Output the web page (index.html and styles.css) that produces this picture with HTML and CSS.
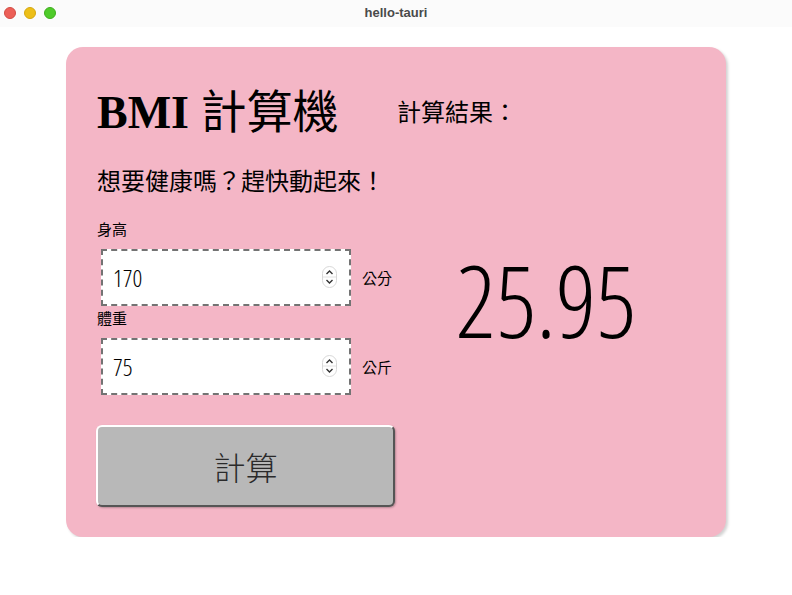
FILE: index.html
```html
<!DOCTYPE html>
<html lang="zh-Hant">
<head>
<meta charset="utf-8">
<title>hello-tauri</title>
<link rel="stylesheet" href="styles.css">
</head>
<body>
<div class="titlebar">
  <div class="lights">
    <span class="light red"></span>
    <span class="light yellow"></span>
    <span class="light green"></span>
  </div>
  <div class="wintitle">hello-tauri</div>
</div>
<main class="page">
  <section class="card">
    <div class="left">
      <h1 class="title">BMI <span class="cjk">計算機</span></h1>
      <p class="subtitle">想要健康嗎？趕快動起來！</p>
      <div class="field">
        <label class="label">身高</label>
        <div class="row">
          <div class="inputbox">
            <span class="value">170</span>
            <svg class="spin" width="15" height="22" viewBox="0 0 15 22"><rect x="0.5" y="0.5" width="14" height="21" rx="7" fill="#fff" stroke="#d8d8d8"/><line x1="1" y1="11" x2="14" y2="11" stroke="#e2e2e2"/><path d="M4.5 8 L7.5 5 L10.5 8" fill="none" stroke="#333" stroke-width="1.4"/><path d="M4.5 14 L7.5 17 L10.5 14" fill="none" stroke="#333" stroke-width="1.4"/></svg>
          </div>
          <span class="unit">公分</span>
        </div>
      </div>
      <div class="field">
        <label class="label">體重</label>
        <div class="row">
          <div class="inputbox">
            <span class="value">75</span>
            <svg class="spin" width="15" height="22" viewBox="0 0 15 22"><rect x="0.5" y="0.5" width="14" height="21" rx="7" fill="#fff" stroke="#d8d8d8"/><line x1="1" y1="11" x2="14" y2="11" stroke="#e2e2e2"/><path d="M4.5 8 L7.5 5 L10.5 8" fill="none" stroke="#333" stroke-width="1.4"/><path d="M4.5 14 L7.5 17 L10.5 14" fill="none" stroke="#333" stroke-width="1.4"/></svg>
          </div>
          <span class="unit">公斤</span>
        </div>
      </div>
      <button class="calc">計算</button>
    </div>
    <div class="right">
      <h2 class="result-label">計算結果：</h2>
      <div class="result"><span class="num">25.95</span></div>
    </div>
  </section>
</main>
</body>
</html>
```
FILE: styles.css
```css
html, body {
  margin: 0;
  padding: 0;
  background: #ffffff;
}
body {
  font-family: "Liberation Serif", "Noto Sans CJK TC", serif;
  color: #000;
}
.titlebar {
  height: 27px;
  background: #fbfbfb;
  display: flex;
  align-items: center;
  position: relative;
}
.lights {
  display: flex;
  gap: 8px;
  padding-left: 4px;
  margin-top: -1px;
}
.light {
  width: 12px;
  height: 12px;
  border-radius: 50%;
  box-sizing: border-box;
}
.red { background: #ec5f57; border: 0.5px solid #d34b43; }
.yellow { background: #edbf18; border: 0.5px solid #d6a80f; }
.green { background: #4fcb2a; border: 0.5px solid #3fae1d; }
.wintitle {
  position: absolute;
  left: 0;
  right: 0;
  top: 5px;
  text-align: center;
  font-family: "Liberation Sans", "Noto Sans", sans-serif;
  font-weight: bold;
  font-size: 13px;
  color: #4a4a4a;
}
.page {
  padding: 20px 66px 0 66px;
}
.card {
  box-sizing: border-box;
  width: 660px;
  height: 490px;
  background: #f4b6c6;
  border-radius: 17px;
  box-shadow: 2px 2px 3px rgba(0,0,0,0.18);
  padding: 31px 31px 30px 31px;
  display: flex;
}
.left {
  width: 300px;
  display: flex;
  flex-direction: column;
}
.title {
  margin: 0;
  font-size: 46px;
  line-height: 70px;
  font-weight: bold;
  white-space: nowrap;
}
.title .cjk {
  font-weight: 400;
}
.title, .subtitle, .result-label {
  font-family: "Liberation Serif", "Noto Sans CJK TC", serif;
}
.subtitle {
  margin: 17px 0 0 0;
  font-size: 24px;
  line-height: 34px;
  white-space: nowrap;
}
.field {
  display: flex;
  flex-direction: column;
}
.field:first-of-type { margin-top: 20px; }
.field + .field { margin-top: 2px; }
.label {
  font-family: "Noto Sans CJK TC", sans-serif;
  font-size: 15px;
  line-height: 20px;
}
.row {
  display: flex;
  align-items: center;
  margin-top: 10px;
  padding-left: 4px;
}
.inputbox {
  box-sizing: border-box;
  width: 250px;
  height: 57px;
  background: #fff;
  border: 2px dashed #737373;
  display: flex;
  align-items: center;
  padding: 0 12px 0 10px;
}
.value {
  flex: 1;
  font-family: "Open Sans", sans-serif;
  font-stretch: 75%;
  font-size: 24px;
  font-weight: 300;
  color: #000;
}
.spin { display: block; margin-top: -1px; }
.unit {
  margin-left: 11px;
  font-family: "Noto Sans CJK TC", sans-serif;
  font-size: 15px;
}
.calc {
  margin: 30px 0 0 -1px;
  width: 299px;
  height: 82px;
  box-sizing: border-box;
  background: #b8b8b8;
  border-style: solid;
  border-width: 2px;
  border-color: #ffffff #555555 #555555 #ffffff;
  border-radius: 6px;
  box-shadow: 1px 1px 2px rgba(0,0,0,0.25);
  font-family: "Noto Sans CJK TC", sans-serif;
  font-weight: 300;
  font-size: 32px;
  color: #2a2a2a;
  padding: 0;
}
.right {
  flex: 1;
  display: flex;
  flex-direction: column;
}
.result-label {
  margin: 0;
  font-size: 24px;
  line-height: 70px;
  font-weight: normal;
  white-space: nowrap;
}
.result {
  margin-top: 102px;
  text-align: center;
  line-height: 1;
}
.num {
  display: inline-block;
  font-family: "Open Sans", sans-serif;
  font-stretch: 75%;
  font-weight: 300;
  font-size: 99px;
}
```
